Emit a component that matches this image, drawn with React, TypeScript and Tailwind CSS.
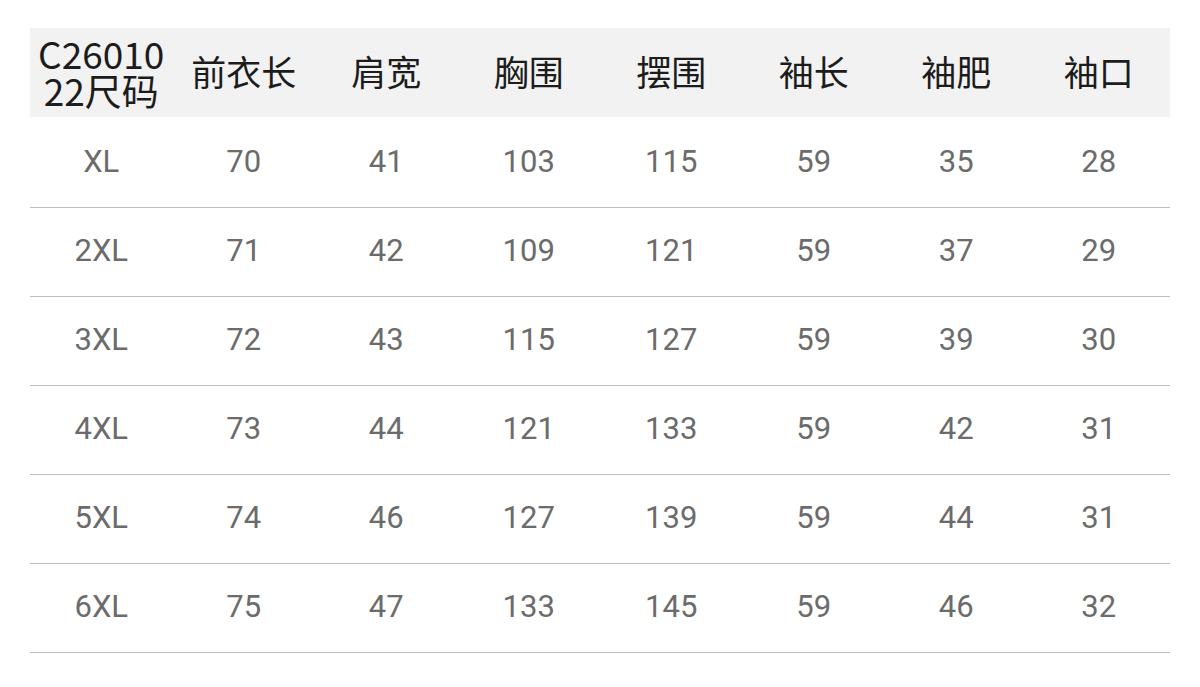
import React from "react";

const headers = ["前衣长", "肩宽", "胸围", "摆围", "袖长", "袖肥", "袖口"];

const rows = [
  ["XL", "70", "41", "103", "115", "59", "35", "28"],
  ["2XL", "71", "42", "109", "121", "59", "37", "29"],
  ["3XL", "72", "43", "115", "127", "59", "39", "30"],
  ["4XL", "73", "44", "121", "133", "59", "42", "31"],
  ["5XL", "74", "46", "127", "139", "59", "44", "31"],
  ["6XL", "75", "47", "133", "145", "59", "46", "32"],
];

export default function App() {
  return (
    <div className="w-[1200px] h-[687px] bg-white pt-[28px] px-[30px]">
      <div className="grid grid-cols-8 h-[89px] bg-[#f2f2f2] text-[#1c1c1c] font-['Noto_Sans_CJK_SC','Noto_Sans',sans-serif]">
        <div className="flex flex-col items-center justify-center text-[37px] leading-[37px] pb-[2px]">
          <span>C26010</span>
          <span>22尺码</span>
        </div>
        {headers.map((h) => (
          <div key={h} className="flex items-center justify-center text-[35px] pb-[3px]">
            {h}
          </div>
        ))}
      </div>
      <div className="pt-[2px]">
        {rows.map((row) => (
          <div
            key={row[0]}
            className="grid grid-cols-8 h-[89px] border-b border-[#bdbdbd] text-[#6b6b6b] font-['Roboto',sans-serif] text-[31px]"
          >
            {row.map((v, i) => (
              <div key={i} className="flex items-center justify-center pb-[2px]">
                {v}
              </div>
            ))}
          </div>
        ))}
      </div>
    </div>
  );
}
